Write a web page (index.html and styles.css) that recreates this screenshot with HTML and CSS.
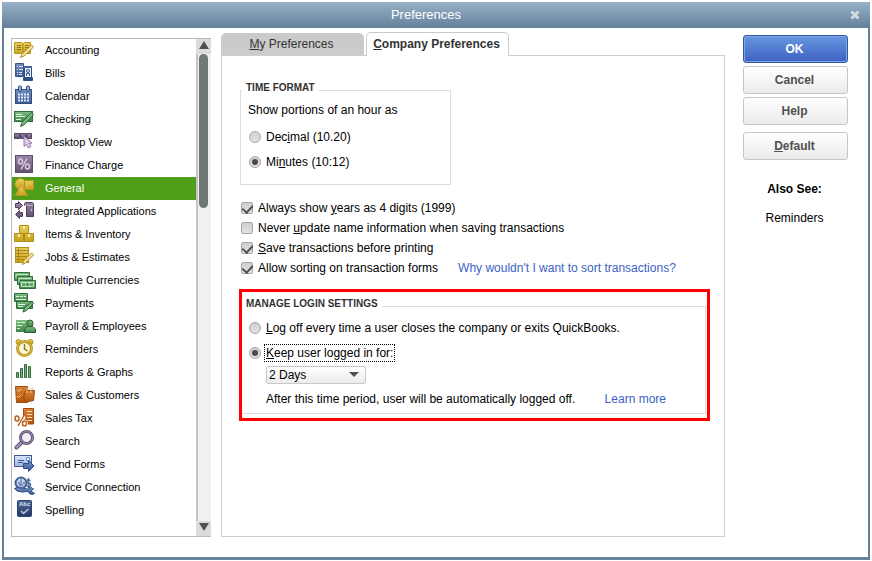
FILE: index.html
```
<!DOCTYPE html>
<html lang="en">
<head>
    <meta charset="UTF-8" />
    <meta name="viewport" content="width=device-width, initial-scale=1.0" />
    <title>Preferences</title>
    <link rel="stylesheet" href="styles.css">
</head>
<body>
<!-- shared icon gradients -->
<svg class="defs" width="0" height="0" aria-hidden="true">
    <defs>
        <linearGradient id="gold" x1="0" y1="0" x2="0" y2="1"><stop offset="0" stop-color="#e8cf5a"/><stop offset="1" stop-color="#c9a21c"/></linearGradient>
        <linearGradient id="blue" x1="0" y1="0" x2="0" y2="1"><stop offset="0" stop-color="#7590c4"/><stop offset="1" stop-color="#3d5a94"/></linearGradient>
        <linearGradient id="navy" x1="0" y1="0" x2="0" y2="1"><stop offset="0" stop-color="#4c6796"/><stop offset="1" stop-color="#243a66"/></linearGradient>
        <linearGradient id="sky" x1="0" y1="0" x2="0" y2="1"><stop offset="0" stop-color="#dbe7fa"/><stop offset="1" stop-color="#9db4dd"/></linearGradient>
        <linearGradient id="green" x1="0" y1="0" x2="0" y2="1"><stop offset="0" stop-color="#7fbd82"/><stop offset="1" stop-color="#3f8548"/></linearGradient>
        <linearGradient id="purple" x1="0" y1="0" x2="0" y2="1"><stop offset="0" stop-color="#9b88a8"/><stop offset="1" stop-color="#62506f"/></linearGradient>
        <linearGradient id="orange" x1="0" y1="0" x2="0" y2="1"><stop offset="0" stop-color="#d98336"/><stop offset="1" stop-color="#b4540c"/></linearGradient>
    </defs>
</svg>

<div class="window">
    <header class="titlebar">
        <h1>Preferences</h1>
        <button type="button" class="close" aria-label="Close">
            <svg width="10" height="10" viewBox="0 0 10 10"><path d="M1.5 1.5l7 7M8.5 1.5l-7 7" stroke="#d3dbe2" stroke-width="3"/></svg>
        </button>
    </header>

    <div class="content">
        <nav class="sidebar">
            <ul class="categories">
                <li><a href="#">
                    <svg viewBox="0 0 22 23"><path d="M.5 3.5h7l1.5 1 1.5-1h6v11h-6L9 15.5l-1.5-1h-7z" fill="url(#gold)" stroke="#b8951e"/><path d="M9 5v10" stroke="#a8861a"/><path d="M3 6.500h4M3 8.500h4M3 10.500h4M11 6.500h4M11 8.500h4M11 10.500h3" stroke="#92751a"/><path d="M17.500 6l2 2-9.500 9-3.500 1.500 1.500-3.500z" fill="#f3e3a0" stroke="#b58c2c"/></svg>
                    Accounting</a></li>
                <li><a href="#">
                    <svg viewBox="0 0 22 23"><path d="M1.500 1.500h8v13h-8z" fill="url(#blue)" stroke="#38558e"/><path d="M3 4.500h1M5 4.500h4M3 7.500h1M5 7.500h4M3 10.500h1M5 10.500h3M3 12.500h1M5 12.500h3" stroke="#dce6f7"/><path d="M10.500 4.500h7v11h-7z" fill="#e6edf8" stroke="#2d4a82"/><path d="M10 4h8v2h-8z" fill="#466399"/><circle cx="14" cy="9" r="1.500" fill="none" stroke="#38558e"/><path d="M12.500 14v-2.500h3V14" fill="none" stroke="#38558e"/><rect x="9" y="15" width="10" height="4" rx="1" fill="#2e4c86"/></svg>
                    Bills</a></li>
                <li><a href="#">
                    <svg viewBox="0 0 22 23"><rect x="1.500" y="4.500" width="16" height="14" fill="url(#blue)" stroke="#344d80"/><rect x="4.500" y="1" width="3" height="5" rx="1" fill="#9cb0d7" stroke="#344d80"/><rect x="12.500" y="1" width="3" height="5" rx="1" fill="#9cb0d7" stroke="#344d80"/><path d="M4 9.500h12M4 12.500h12M4 15.500h12" stroke="#e2eaf8" stroke-width="2" stroke-dasharray="2 1"/></svg>
                    Calendar</a></li>
                <li><a href="#">
                    <svg viewBox="0 0 22 23"><rect x=".5" y="3.500" width="18" height="10" fill="url(#green)" stroke="#2f6e39"/><path d="M2 6.500h6M2 8.500h9M2 11.500h5" stroke="#e1f3e1"/><path d="M17.500 4.500l2 2-9 10-4 2 1.500-4z" fill="#83b987" stroke="#275f30"/></svg>
                    Checking</a></li>
                <li><a href="#">
                    <svg viewBox="0 0 22 23"><path d="M.5 2.500h5v5h-5zM6.500 2.500h5v5h-5zM12.500 2.500h5v5h-5z" fill="url(#purple)" stroke="#54415f"/><path d="M10 5v10.500l2.500-2 2 3.500 2.500-1.500-2-3 3-.5z" fill="#e0c9ee" stroke="#927aa6"/></svg>
                    Desktop View</a></li>
                <li><a href="#">
                    <svg viewBox="0 0 22 23"><rect x="1.500" y="1.500" width="17" height="17" fill="url(#purple)" stroke="#604c6e"/><g fill="none" stroke="#d9c7e4" stroke-width="1.500"><ellipse cx="6.500" cy="7.500" rx="2" ry="2.500"/><ellipse cx="13.500" cy="12.500" rx="2" ry="2.500"/><path d="M13 4.500L7 15.500"/></g></svg>
                    Finance Charge</a></li>
                <li><a href="#" class="selected">
                    <svg viewBox="0 0 22 23"><circle cx="6.500" cy="7" r="5.500" fill="url(#gold)" stroke="#b8951e"/><rect x="10.500" y="3.500" width="9" height="9" fill="url(#gold)" stroke="#b8951e"/><path d="M7.500 7.500l6 11H1z" fill="url(#gold)" stroke="#b8951e"/></svg>
                    General</a></li>
                <li><a href="#">
                    <svg viewBox="0 0 22 23"><path d="M1.500 3.500h3v-2l4 4-4 4v-2h-3zM8.500 12.500h-3v-2l-4 4 4 4v-2h3z" fill="url(#purple)" stroke="#54415f"/><path d="M10.500 5.500v-2l1-1h7l1 1v13h-7v-11z" fill="url(#purple)" stroke="#4f3c5b"/><path d="M10 5.500h9" stroke="#b9a8c5"/><path d="M17.500 9v2" stroke="#dccce6"/></svg>
                    Integrated Applications</a></li>
                <li><a href="#">
                    <svg viewBox="0 0 22 23"><path d="M5.500 2.500h9v8h-9zM.5 10.500h9v8h-9zM10.500 10.500h9v8h-9z" fill="url(#gold)" stroke="#b38e16"/><path d="M10 3v3M5 11v3M15 11v3" stroke="#f6eab0" stroke-width="2"/></svg>
                    Items &amp; Inventory</a></li>
                <li><a href="#">
                    <svg viewBox="0 0 22 23"><rect x="1.500" y="1.500" width="13" height="15" fill="url(#gold)" stroke="#b38e16"/><path d="M1 4.500h13M1 7.500h13M1 10.500h12M1 13.500h9M4.500 2v14" stroke="#a8861a"/><path d="M17.500 7l2 2-8 8-3 1.500 1-3.500z" fill="#f3e3a0" stroke="#b58c2c"/></svg>
                    Jobs &amp; Estimates</a></li>
                <li><a href="#">
                    <svg viewBox="0 0 22 23"><g fill="url(#green)" stroke="#2f6e39"><path d="M.5 3.500h15v8h-15z"/><path d="M3.500 7.500h15v8h-15z"/><path d="M5.500 11.500h16v8h-16z"/></g><path d="M2 9.500v-4h12M5 13.500v-4h12M7.500 13.500h12v4h-12z" fill="none" stroke="#c4e4c4"/><circle cx="13.500" cy="15.500" r="2" fill="#3f8548" stroke="#c4e4c4"/></svg>
                    Multiple Currencies</a></li>
                <li><a href="#">
                    <svg viewBox="0 0 22 23"><path d="M.5 1.500h13v8H.5z" fill="url(#green)" stroke="#2f6e39"/><path d="M2.500 9.500h16v7h-16z" fill="url(#green)" stroke="#2f6e39"/><path d="M2 4.500h3M6 4.500h3M10 4.500h2M2 7.500h10M4 12.500h7M4 14.500h5" stroke="#e1f3e1"/><path d="M18 9.500l1.500 2-7 7-3.500 1.500 1.500-4z" fill="#83b987" stroke="#275f30"/></svg>
                    Payments</a></li>
                <li><a href="#">
                    <svg viewBox="0 0 22 23"><rect x="2" y="5" width="13" height="12" fill="url(#green)"/><path d="M3 7.500h3M3 10.500h5M3 13.500h3M7 7.500h4" stroke="#e1f3e1"/><path d="M10.500 17.500v-3.500l3-2.500h5l3 2.500v3.500z" fill="url(#green)" stroke="#275f30"/><ellipse cx="16" cy="8.500" rx="3" ry="3.500" fill="url(#green)" stroke="#275f30"/></svg>
                    Payroll &amp; Employees</a></li>
                <li><a href="#">
                    <svg viewBox="0 0 22 23"><circle cx="4.500" cy="4" r="2.500" fill="url(#gold)" stroke="#b8951e"/><circle cx="16.500" cy="4" r="2.500" fill="url(#gold)" stroke="#b8951e"/><circle cx="10.500" cy="10.500" r="7" fill="#fbf6de" stroke="#b8951e" stroke-width="3"/><circle cx="10.500" cy="10.500" r="7" fill="none" stroke="#e2c656"/><path d="M10.500 6v5l3 2" fill="none" stroke="#9b7c1b" stroke-width="1.500"/></svg>
                    Reminders</a></li>
                <li><a href="#">
                    <svg viewBox="0 0 22 23"><path d="M2.500 11.500h2v5h-2zM6.500 7.500h2v9h-2zM10.500 3.500h2v13h-2zM14.500 5.500h2v11h-2z" fill="#7fae83" stroke="#2f6e39"/></svg>
                    Reports &amp; Graphs</a></li>
                <li><a href="#">
                    <svg viewBox="0 0 22 23"><path d="M1.500 2.500h12v16h-11z" fill="url(#orange)" stroke="#a34b0a"/><path d="M3 6l1.500 1.500L7 5M3 12l1.500 1.500L7 11" fill="none" stroke="#f5d1ae"/><path d="M11.500 6.500h9l-1 10-8 1.500-2-4z" fill="url(#orange)" stroke="#9d4708"/><path d="M13 9V5q2-3 2 1M17 9V5q2-3 2 1" fill="none" stroke="#f0bf90"/></svg>
                    Sales &amp; Customers</a></li>
                <li><a href="#">
                    <svg viewBox="0 0 22 23"><path d="M9.500 1.500h10v15.500h-10z" fill="url(#orange)" stroke="#a34b0a"/><path d="M13 4.500h5M13 7.500h5M13 10.500h5M14 13.500h4" stroke="#fbdcbd"/><g fill="none" stroke="#fff" stroke-width="4"><circle cx="3" cy="11.500" r="2"/><circle cx="10" cy="16.500" r="2"/><path d="M10 9L4 19"/></g><g fill="none" stroke="#b9621d" stroke-width="1.500"><ellipse cx="3" cy="11.500" rx="2" ry="2.500"/><ellipse cx="10.500" cy="16.500" rx="2" ry="2.500"/><path d="M10 8.500L4 19"/></g></svg>
                    Sales Tax</a></li>
                <li><a href="#">
                    <svg viewBox="0 0 22 23"><path d="M8 12l-5.500 5.500" stroke="#66547a" stroke-width="4" stroke-linecap="round"/><path d="M8 12l-5.500 5.500" stroke="#a795b5" stroke-width="2" stroke-linecap="round"/><circle cx="12.500" cy="7.500" r="6" fill="#f1eef6" stroke="#66547a" stroke-width="3"/><circle cx="12.500" cy="7.500" r="6" fill="none" stroke="#a191ae"/></svg>
                    Search</a></li>
                <li><a href="#">
                    <svg viewBox="0 0 22 23"><rect x=".5" y="2.500" width="17" height="11" fill="url(#sky)" stroke="#3d5a94"/><path d="M4 7.500h6M4 9.500h5" stroke="#3d5a94"/><path d="M12.500 4.500h3v3h-3z" fill="#fff" stroke="#7590c4"/><path d="M9.500 10.500h5v-3l5.500 5.500-5.500 5.500v-3h-5z" fill="url(#blue)" stroke="#2c4a86"/></svg>
                    Send Forms</a></li>
                <li><a href="#">
                    <svg viewBox="0 0 22 23"><circle cx="7" cy="7" r="5.500" fill="url(#sky)" stroke="#445f92" stroke-width="2"/><path d="M7 3v5M4 7h2M9 7h2M5 9h4" stroke="#445f92"/><path d="M16.500 4.500q-4-1.500-4 1 0 1.500 2 1.500t2 2q0 2-4 1M14.500 2v10" fill="none" stroke="#526da1" stroke-width="1.500"/><path d="M.5 12.500l3-1 4 .5 6 1 3-2 3 2-2 1.500 1 2 2 .5-1.500 1.500-3-.5-2-2.500-6 .5-5-1z" fill="url(#blue)" stroke="#334f85"/></svg>
                    Service Connection</a></li>
                <li><a href="#">
                    <svg viewBox="0 0 22 23"><rect x="3.500" y="1.500" width="14" height="16" rx="1" fill="url(#navy)" stroke="#2b4170"/><text x="5" y="7" class="abc">Abc</text><path d="M7 12l2.500 2.500 5-4.500" fill="none" stroke="#b9c9e8" stroke-width="1.500"/></svg>
                    Spelling</a></li>
            </ul>
            <div class="scrollbar">
                <button type="button" class="scroll-up" aria-label="Scroll up"></button>
                <div class="track"><div class="thumb"></div></div>
                <button type="button" class="scroll-down" aria-label="Scroll down"></button>
            </div>
        </nav>

        <main class="main">
            <div class="tabs" role="tablist">
                <button type="button" class="tab" role="tab"><u>M</u>y Preferences</button>
                <button type="button" class="tab active" role="tab" aria-selected="true"><u>C</u>ompany Preferences</button>
            </div>
            <form class="panel">
                <fieldset class="time-format">
                    <legend>TIME FORMAT</legend>
                    <p>Show portions of an hour as</p>
                    <div class="option">
                        <input type="radio" id="decimal" name="portions" />
                        <label for="decimal">Dec<u>i</u>mal (10.20)</label>
                    </div>
                    <div class="option">
                        <input type="radio" id="minutes" name="portions" checked />
                        <label for="minutes">Mi<u>n</u>utes (10:12)</label>
                    </div>
                </fieldset>

                <div class="checks">
                    <div class="option">
                        <input type="checkbox" id="years" checked />
                        <label for="years">Always show <u>y</u>ears as 4 digits (1999)</label>
                    </div>
                    <div class="option">
                        <input type="checkbox" id="never" />
                        <label for="never">Never <u>u</u>pdate name information when saving transactions</label>
                    </div>
                    <div class="option">
                        <input type="checkbox" id="save" checked />
                        <label for="save"><u>S</u>ave transactions before printing</label>
                    </div>
                    <div class="option">
                        <input type="checkbox" id="sorting" checked />
                        <label for="sorting">Allow sorting on transaction forms</label>
                        <a href="#" class="help-link">Why wouldn't I want to sort transactions?</a>
                    </div>
                </div>

                <div class="highlight">
                    <fieldset class="login">
                        <legend>MANAGE LOGIN SETTINGS</legend>
                        <div class="option">
                            <input type="radio" id="logoff" name="login" />
                            <label for="logoff"><u>L</u>og off every time a user closes the company or exits QuickBooks.</label>
                        </div>
                        <div class="option">
                            <input type="radio" id="keep" name="login" checked />
                            <label for="keep" class="focused"><u>K</u>eep user logged in for:</label>
                        </div>
                        <div class="select">
                            <select aria-label="Keep user logged in for">
                                <option>2 Days</option>
                            </select>
                        </div>
                        <p class="note">After this time period, user will be automatically logged off. <a href="#" class="help-link">Learn more</a></p>
                    </fieldset>
                </div>
            </form>
        </main>

        <aside class="actions">
            <button type="button" class="btn primary">OK</button>
            <button type="button" class="btn">Cancel</button>
            <button type="button" class="btn">Help</button>
            <button type="button" class="btn default"><u>D</u>efault</button>
            <h2>Also See:</h2>
            <a href="#">Reminders</a>
        </aside>
    </div>
</div>
</body>
</html>
```
FILE: styles.css
```
* {
    box-sizing: border-box;
}
body {
    margin: 0;
    padding: 2px 2px 1px;
    min-height: 100vh;
    display: flex;
    background-color: #fff;
    color: #000;
    font-family: "Liberation Sans", Arial, sans-serif;
    font-size: 12px;
    line-height: 16px;
}
button, select, input {
    font: inherit;
    margin: 0;
}
p, h1, h2, ul {
    margin: 0;
    padding: 0;
}
a {
    text-decoration: none;
}
.defs {
    position: absolute;
}

.window {
    flex: 1;
    display: flex;
    flex-direction: column;
    border: 2px solid #67839a;
    border-top: none;
    border-bottom-width: 3px;
}
.titlebar {
    display: grid;
    grid-template-columns: 8px 1fr 28px;
    align-items: center;
    height: 26px;
    margin: 0 -2px;
    background: linear-gradient(#97b2c8, #64809a);
}
.titlebar h1 {
    grid-column: 2;
    text-align: center;
    color: #fff;
    font-size: 13px;
    font-weight: normal;
}
.close {
    display: flex;
    padding: 8px;
    border: none;
    background: none;
}
.content {
    flex: 1;
    display: grid;
    grid-template-columns: 200px 1fr 105px;
    padding: 4px 20px 20px 7px;
}

/* category list */
.sidebar {
    display: flex;
    margin-top: 6px;
    border: 1px solid #b9b9b9;
    border-right: none;
}
.categories {
    flex: 1;
    list-style: none;
    font-size: 11px;
}
.categories a {
    display: flex;
    align-items: center;
    gap: 9px;
    height: 23px;
    padding: 0 0 1px 2px;
    color: #000;
}
.categories a.selected {
    background-color: #4f9e19;
    color: #fff;
}
.categories svg {
    align-self: flex-start;
    width: 22px;
    height: 23px;
}
.abc {
    font-size: 6px;
    font-weight: bold;
    fill: #dbe5f8;
}
.scrollbar {
    display: flex;
    flex-direction: column;
    width: 15px;
    background-color: #f0f0f0;
}
.scroll-up, .scroll-down {
    display: flex;
    align-items: center;
    justify-content: center;
    height: 15px;
    padding: 0 0 3px;
    border: none;
    background-color: #dcdcdc;
}
.scroll-up::before, .scroll-down::before {
    content: "";
    border: 5px solid transparent;
}
.scroll-up::before {
    border-top: none;
    border-bottom: 8px solid #505050;
}
.scroll-down::before {
    border-bottom: none;
    border-top: 8px solid #505050;
}
.track {
    flex: 1;
    padding: 0 3px 0 1px;
    border-left: 2px solid #c4c4c4;
}
.thumb {
    height: 154px;
    border-radius: 5px;
    background-color: #707877;
}

/* tabs and panel */
.main {
    display: flex;
    flex-direction: column;
    padding: 0 18px 0 10px;
}
.tabs {
    display: flex;
    align-items: flex-end;
    gap: 2px;
    margin-bottom: -1px;
}
.tab {
    width: 143px;
    height: 23px;
    padding: 0 2px 1px 0;
    border: none;
    border-radius: 5px 5px 0 0;
    background-color: #cbcbcb;
    color: #333;
}
.tab.active {
    position: relative;
    height: 24px;
    padding: 0 2px 2px 0;
    border: 1px solid #cbcbcb;
    border-bottom: none;
    background-color: #fff;
    font-weight: bold;
}
.panel {
    flex: 1;
    padding: 27px 14px 27px 18px;
    border: 1px solid #cfcfcf;
}
fieldset {
    display: block;
    margin: 0;
    border: 1px solid #dcdcdc;
}
legend {
    padding: 0 4px 4px;
    color: #333;
    font-size: 10px;
    font-weight: bold;
    line-height: 10px;
}
.time-format {
    width: 211px;
    padding: 5px 7px 14px;
}
.time-format legend {
    margin-left: -6px;
}
.time-format p {
    margin-bottom: 11px;
}
.option {
    display: flex;
    align-items: center;
    gap: 5px;
    height: 16px;
}
.time-format .option {
    padding-left: 1px;
}
.option + .option {
    margin-top: 9px;
}
input {
    flex: none;
    display: grid;
    place-items: center;
    appearance: none;
    width: 12px;
    height: 12px;
    border: 1px solid #a6a6a6;
    background: linear-gradient(#cfcfcf, #e2e2e2);
}
input[type="radio"] {
    border-radius: 50%;
}
input[type="radio"]:checked::before {
    content: "";
    width: 6px;
    height: 6px;
    border-radius: 50%;
    background-color: #4a4a4a;
}
input[type="checkbox"] {
    border-radius: 2px;
}
input[type="checkbox"]:checked::before {
    content: "";
    width: 5px;
    height: 8px;
    margin-bottom: 2px;
    border: solid #505050;
    border-width: 0 2px 2px 0;
    transform: rotate(42deg);
}
.checks {
    margin-top: 15px;
    padding-left: 1px;
}
.checks .option + .option {
    margin-top: 4px;
}
.help-link {
    color: #3d62c4;
}
.checks .help-link {
    margin-left: 15px;
}

/* login settings */
.highlight {
    margin: 13px 0 0 -1px;
    padding: 7px 1px 4px 0;
    border: 3px solid #f00;
}
.login {
    padding: 7px 7px 6px;
    border-left: none;
}
.login legend {
    margin-left: -7px;
}
.focused {
    outline: 1px dotted #000;
    outline-offset: 1px;
    line-height: 14px;
}
.select {
    position: relative;
    width: 100px;
    margin: 5px 0 7px 17px;
}
.select::after {
    content: "";
    position: absolute;
    top: 6px;
    right: 7px;
    border: 5px solid transparent;
    border-top-color: #505050;
    border-bottom: none;
    pointer-events: none;
}
select {
    display: block;
    appearance: none;
    width: 100%;
    height: 18px;
    padding: 0 2px;
    border: 1px solid #c9c9c9;
    border-radius: 2px;
    background: linear-gradient(#fff, #ececec);
    color: #000;
}
.note {
    margin-left: 17px;
}
.note .help-link {
    margin-left: 26px;
}

/* buttons on the right */
.actions {
    display: flex;
    flex-direction: column;
    gap: 3px;
    padding-top: 3px;
    text-align: center;
}
.btn {
    height: 28px;
    padding: 0 2px 0 0;
    border: 1px solid #c6c6c6;
    border-radius: 3px;
    background: linear-gradient(#fff, #ebebeb);
    color: #505050;
    font-weight: bold;
}
.btn.primary {
    border-color: #37599b;
    background: linear-gradient(#6797df, #3c61c3);
    box-shadow: inset 0 0 0 1px #7ba6ea;
    color: #fff;
}
.btn.default {
    margin-top: 4px;
}
.actions h2 {
    margin: 18px 0 10px;
    font-size: 12px;
}
.actions h2, .actions a {
    padding-right: 2px;
}
.actions a {
    color: #000;
}
```
